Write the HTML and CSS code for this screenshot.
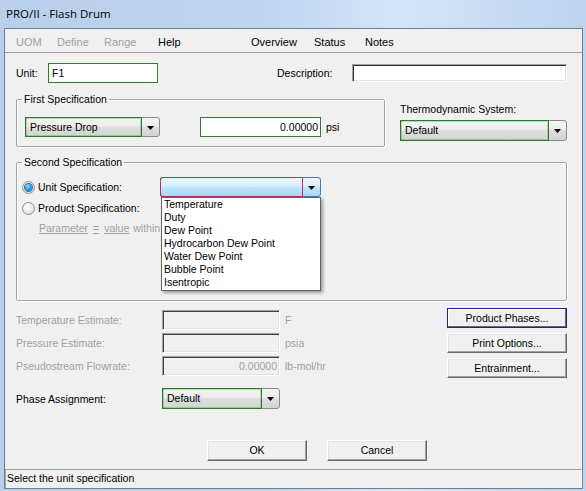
FILE: index.html
```html
<!DOCTYPE html>
<html>
<head>
<meta charset="utf-8">
<title>PRO/II - Flash Drum</title>
<link rel="stylesheet" href="styles.css">
</head>
<body>
<div class="window">
  <div class="titlebar">PRO/II - Flash Drum</div>
  <div class="client">
    <div class="menubar">
      <span class="mi dis w-uom">UOM</span>
      <span class="mi dis w-define">Define</span>
      <span class="mi dis w-range">Range</span>
      <span class="mi w-help">Help</span>
      <span class="mi w-overview">Overview</span>
      <span class="mi w-status">Status</span>
      <span class="mi">Notes</span>
    </div>
    <div class="form">
      <div class="row-unit">
        <span class="lbl-unit">Unit:</span>
        <div class="edit req w-f1">F1</div>
        <span class="lbl-desc">Description:</span>
        <div class="edit sunken w-desc"></div>
      </div>

      <div class="row-first">
        <fieldset class="group g1">
          <legend>First Specification</legend>
          <div class="g1-body">
            <div class="combo w-pd">
              <span class="combo-text req-in">Pressure Drop</span>
              <span class="combo-btn"><svg width="7" height="4" viewBox="0 0 7 4"><path d="M0 0H7L3.5 4Z" fill="#000"/></svg></span>
            </div>
            <div class="edit req num w-val">0.00000</div>
            <span class="unit">psi</span>
          </div>
        </fieldset>
        <div class="thermo">
          <div class="thermo-lbl">Thermodynamic System:</div>
          <div class="combo w-thermo">
            <span class="combo-text req-in">Default</span>
            <span class="combo-btn"><svg width="7" height="4" viewBox="0 0 7 4"><path d="M0 0H7L3.5 4Z" fill="#000"/></svg></span>
          </div>
        </div>
      </div>

      <fieldset class="group g2">
        <legend>Second Specification</legend>
        <div class="g2-row">
          <span class="radio checked"><span class="dot"></span></span>
          <span class="radio-lbl">Unit Specification:</span>
          <div class="combo-wrap">
            <div class="combo hot w-us">
              <span class="combo-text red-in"></span>
              <span class="combo-btn"><svg width="7" height="4" viewBox="0 0 7 4"><path d="M0 0H7L3.5 4Z" fill="#000"/></svg></span>
            </div>
            <ul class="droplist">
              <li>Temperature</li>
              <li>Duty</li>
              <li>Dew Point</li>
              <li>Hydrocarbon Dew Point</li>
              <li>Water Dew Point</li>
              <li>Bubble Point</li>
              <li>Isentropic</li>
            </ul>
          </div>
        </div>
        <div class="g2-row r2">
          <span class="radio"></span>
          <span class="radio-lbl">Product Specification:</span>
        </div>
        <div class="g2-row param">
          <span class="u">Parameter</span><span class="sp"></span><span class="u">=</span><span class="sp"></span><span class="u">value</span><span class="sp2"></span><span>within</span>
        </div>
      </fieldset>

      <div class="lower">
        <div class="lower-left">
          <div class="est-row">
            <span class="est-lbl">Temperature Estimate:</span>
            <div class="edit disabled w-est"></div>
            <span class="est-unit">F</span>
          </div>
          <div class="est-row">
            <span class="est-lbl">Pressure Estimate:</span>
            <div class="edit disabled w-est"></div>
            <span class="est-unit">psia</span>
          </div>
          <div class="est-row">
            <span class="est-lbl">Pseudostream Flowrate:</span>
            <div class="edit disabled num w-est">0.00000</div>
            <span class="est-unit">lb-mol/hr</span>
          </div>
          <div class="est-row phase">
            <span class="est-lbl black">Phase Assignment:</span>
            <div class="combo w-phase">
              <span class="combo-text req-in">Default</span>
              <span class="combo-btn"><svg width="7" height="4" viewBox="0 0 7 4"><path d="M0 0H7L3.5 4Z" fill="#000"/></svg></span>
            </div>
          </div>
        </div>
        <div class="lower-right">
          <div class="btn default">Product Phases...</div>
          <div class="btn">Print Options...</div>
          <div class="btn">Entrainment...</div>
        </div>
      </div>

      <div class="footer">
        <div class="btn w-okc">OK</div>
        <div class="btn w-okc">Cancel</div>
      </div>
    </div>
    <div class="statusbar">Select the unit specification</div>
  </div>
</div>
</body>
</html>
```

FILE: styles.css
```css
* { box-sizing: border-box; }

body {
  margin: 0;
  width: 586px;
  height: 491px;
  overflow: hidden;
  background: #c0d6ee;
  font-family: "Liberation Sans", Arial, sans-serif;
  font-size: 10.5px;
  color: #000;
}

.window {
  width: 586px;
  height: 491px;
  display: flex;
  flex-direction: column;
  background: linear-gradient(to right, #b8d0eb 0%, #bdd5ef 45%, #d4e6f8 68%, #c9ddf3 82%, #bcd4ee 100%);
}

.titlebar {
  height: 28px;
  padding-left: 6px;
  line-height: 27px;
  font-family: "Open Sans", "Noto Sans", sans-serif;
  font-size: 11.5px;
  color: #000;
}

.client {
  margin-left: 4px;
  width: 579px;
  height: 461px;
  border: 1px solid #6f7d8d;
  background: #f0f0f0;
  display: flex;
  flex-direction: column;
}

/* menu */
.menubar {
  height: 24px;
  padding-top: 6px;
  padding-left: 11px;
  border-bottom: 1px solid #a0a0a0;
  display: flex;
  font-size: 11px;
  line-height: 14px;
}
.mi { white-space: nowrap; }
.mi.dis { color: #a0a0a0; }
.w-uom { width: 41px; }
.w-define { width: 47px; }
.w-range { width: 54px; }
.w-help { width: 93px; }
.w-overview { width: 63px; }
.w-status { width: 51px; }

/* form */
.form {
  padding-left: 11px;
  width: 562px;
}

.row-unit {
  margin-top: 10px;
  height: 20px;
  display: flex;
  align-items: center;
}
.lbl-unit { width: 32px; }
.lbl-desc { margin-left: 119px; width: 75px; }

.edit {
  height: 20px;
  line-height: 18px;
  padding: 0 3px;
  white-space: nowrap;
  overflow: hidden;
}
.edit.req {
  background: #fff;
  border: 1px solid #2f7d2f;
}
.edit.sunken {
  background: #fff;
  border: 1px solid;
  border-color: #a0a0a0 #fff #fff #a0a0a0;
  box-shadow: inset 1px 1px 0 #303030, inset -1px -1px 0 #e3e3e3;
}
.edit.disabled {
  background: #f0f0f0;
  border: 1px solid;
  border-color: #a0a0a0 #fff #fff #a0a0a0;
  box-shadow: inset 1px 1px 0 #404040, inset -1px -1px 0 #e3e3e3;
  color: #a0a0a0;
}
.edit.num { text-align: right; padding-right: 2px; }
.w-f1 { width: 110px; }
.w-desc { width: 215px; height: 18px; }
.w-val { width: 121px; margin-left: 40px; }

/* group boxes */
.group {
  margin: 0;
  border: 1px solid #a5a5a5;
  border-radius: 2px;
  box-shadow: inset 1px 1px 0 #fff, 1px 1px 0 #fff;
  min-width: 0;
}
.group legend {
  padding: 0 2px;
  line-height: 12px;
  height: 12px;
}

.row-first {
  margin-top: 10px;
  display: flex;
  align-items: flex-start;
}
.g1 {
  width: 369px;
  padding: 12px 8px 9px 8px;
}
.g1 legend { margin-left: -3px; }
.g1-body {
  display: flex;
  align-items: center;
  height: 20px;
}
.unit { margin-left: 5px; }

.thermo {
  margin-left: 15px;
  width: 167px;
  padding-top: 9px;
}
.thermo-lbl { line-height: 14px; height: 14px; }

/* combos */
.combo {
  display: flex;
  height: 20px;
  border: 1px solid #8a8a8a;
  border-radius: 3px;
  background: linear-gradient(#f4f4f4 0%, #ececec 45%, #dedede 50%, #d3d3d3 100%);
}
.combo-text {
  flex: 1;
  margin: -1px 0 -1px -1px;
  line-height: 18px;
  padding-left: 4px;
  white-space: nowrap;
  overflow: hidden;
}
.combo-text.req-in {
  border: 1px solid #2d7a2d;
  box-shadow: inset 0 0 0 1px rgba(80, 160, 80, 0.35);
}
.combo-btn {
  width: 17px;
  display: flex;
  align-items: center;
  justify-content: center;
  padding-top: 1px;
}
.w-pd { width: 135px; }
.w-thermo { width: 167px; height: 21px; margin-top: 4px; }
.w-phase { width: 118px; height: 21px; }

.combo.hot {
  border-color: #3c7fb1;
  background: linear-gradient(#eaf6fd 0%, #d9f0fc 45%, #bee6fd 50%, #a7d9f5 100%);
}
.combo-text.red-in {
  border: 1px solid #b4324f;
  border-radius: 2px 0 0 2px;
}
.w-us { width: 161px; }

.combo-wrap { position: relative; }
.droplist {
  position: absolute;
  top: 100%;
  left: 1px;
  width: 160px;
  margin: 0;
  padding: 0 0 1px 0;
  list-style: none;
  background: #fff;
  border: 1px solid #646464;
  box-shadow: 2px 2px 3px rgba(0, 0, 0, 0.35);
  z-index: 2;
}
.droplist li {
  line-height: 13px;
  padding-left: 2px;
  white-space: nowrap;
}

/* second spec */
.g2 {
  margin-top: 9px;
  width: 551px;
  padding: 9px 5px 62px 5px;
}
.g2-row {
  display: flex;
  align-items: center;
  height: 20px;
}
.g2-row.r2 { margin-top: 1px; }
.radio {
  width: 13px;
  height: 13px;
  border-radius: 50%;
  border: 1px solid #8e8f8f;
  background: radial-gradient(circle at 40% 40%, #fbfbfb 0%, #eaeaea 55%, #d3d3d3 100%);
  display: flex;
  align-items: center;
  justify-content: center;
  margin-right: 3px;
  flex: none;
}
.radio .dot {
  width: 7px;
  height: 7px;
  border-radius: 50%;
  background: radial-gradient(circle at 40% 35%, #9fe0ff 0%, #39a3e3 40%, #1c5f9c 100%);
  box-shadow: 0 0 0 1px #2e6fa6;
}
.radio-lbl { width: 122px; }
.param {
  padding-left: 17px;
  color: #a0a0a0;
}
.param .u { text-decoration: underline; }
.param .sp { width: 5px; }
.param .sp2 { width: 4px; }

/* lower area */
.lower {
  margin-top: 9px;
  width: 551px;
  display: flex;
  justify-content: space-between;
  align-items: flex-start;
}
.lower-left {
  display: flex;
  flex-direction: column;
  gap: 3px;
}
.est-row {
  display: flex;
  align-items: center;
  height: 20px;
}
.est-row.phase { margin-top: 9px; height: 21px; }
.est-lbl { width: 146px; color: #a0a0a0; }
.est-lbl.black { color: #000; }
.w-est { width: 118px; }
.est-unit { margin-left: 5px; color: #a0a0a0; }

.lower-right {
  margin-top: -2px;
  display: flex;
  flex-direction: column;
  gap: 5px;
}

.btn {
  width: 120px;
  height: 20px;
  line-height: 18px;
  text-align: center;
  background: #f0f0f0;
  border: 1px solid;
  border-color: #fff #696969 #696969 #fff;
  box-shadow: inset -1px -1px 0 #a0a0a0, inset 1px 1px 0 #e3e3e3;
}
.btn.default {
  border: 1px solid #23237e;
  box-shadow: inset -1px -1px 0 #696969, inset 1px 1px 0 #fff;
}

.footer {
  margin-top: 31px;
  padding-left: 191px;
  display: flex;
  gap: 20px;
}
.w-okc { width: 100px; height: 21px; line-height: 19px; }

.statusbar {
  margin-top: auto;
  height: 19px;
  border-top: 1px solid #a0a0a0;
  border-left: 1px solid #a0a0a0;
  border-right: 1px solid #fff;
  padding-left: 1px;
  line-height: 17px;
}
```
